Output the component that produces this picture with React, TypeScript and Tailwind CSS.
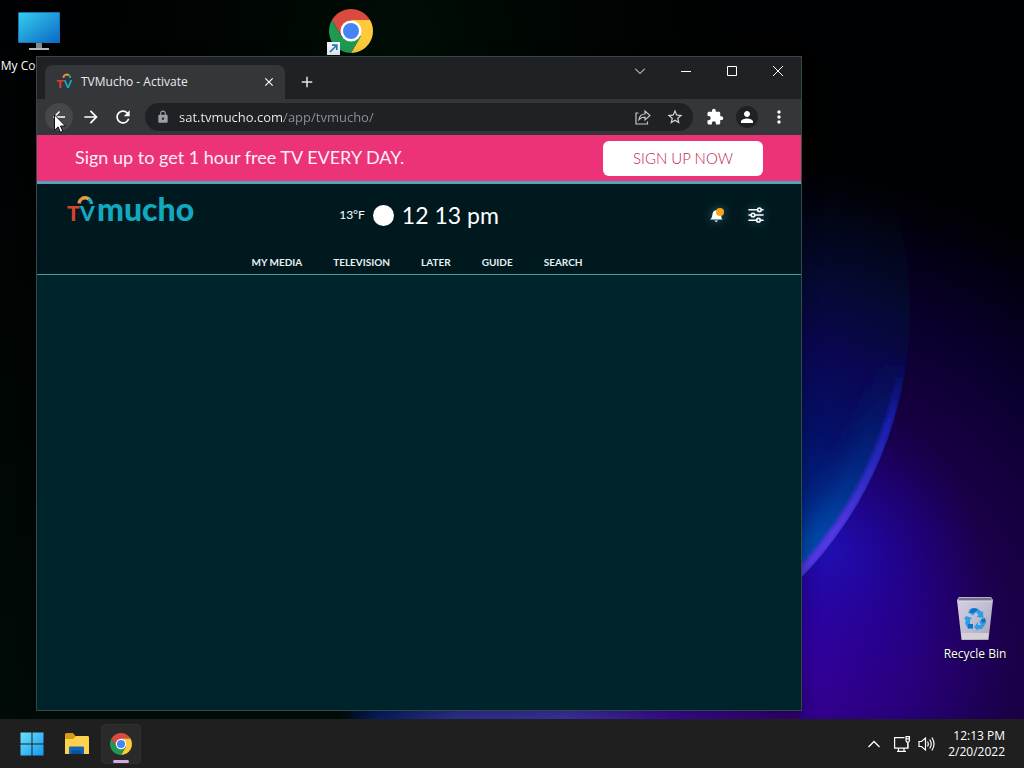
import React from "react";
import {
  MdAdd,
  MdArrowBack,
  MdArrowForward,
  MdClose,
  MdExtension,
  MdLock,
  MdMoreVert,
  MdPerson,
  MdRefresh,
  MdStarBorder,
} from "react-icons/md";

const NAV_ITEMS = ["MY MEDIA", "TELEVISION", "LATER", "GUIDE", "SEARCH"];

function Wallpaper() {
  return (
    <svg
      aria-hidden="true"
      className="absolute inset-0 h-full w-full"
      viewBox="0 0 1024 768"
      preserveAspectRatio="xMidYMid slice"
    >
      <defs>
        <radialGradient id="violet" gradientUnits="userSpaceOnUse" cx="790" cy="650" r="500">
          <stop offset="0" stopColor="#3a00a0" />
          <stop offset="0.25" stopColor="#28007c" />
          <stop offset="0.45" stopColor="#1a0048" />
          <stop offset="0.68" stopColor="#0b0030" />
          <stop offset="0.85" stopColor="#030014" />
          <stop offset="1" stopColor="#000002" stopOpacity="0" />
        </radialGradient>
        <radialGradient id="blueHaze" gradientUnits="userSpaceOnUse" cx="830" cy="550" r="150">
          <stop offset="0" stopColor="#1a18d0" stopOpacity="0.6" />
          <stop offset="0.5" stopColor="#1608b8" stopOpacity="0.3" />
          <stop offset="1" stopColor="#1200a0" stopOpacity="0" />
        </radialGradient>
        <radialGradient id="greenHaze" gradientUnits="userSpaceOnUse" cx="400" cy="40" r="360">
          <stop offset="0" stopColor="#000e06" />
          <stop offset="1" stopColor="#000402" stopOpacity="0" />
        </radialGradient>
        <linearGradient id="leftShade" x1="0" y1="0" x2="0" y2="1">
          <stop offset="0" stopColor="#000906" stopOpacity="0" />
          <stop offset="1" stopColor="#000b07" />
        </linearGradient>
        <radialGradient id="disc" gradientUnits="userSpaceOnUse" cx="760" cy="560" r="400">
          <stop offset="0" stopColor="#0038a0" />
          <stop offset="0.35" stopColor="#041068" />
          <stop offset="0.55" stopColor="#0a0650" />
          <stop offset="0.72" stopColor="#030c34" stopOpacity="0.8" />
          <stop offset="0.88" stopColor="#010a18" stopOpacity="0.5" />
          <stop offset="1" stopColor="#000006" stopOpacity="0" />
        </radialGradient>
        <linearGradient id="rimFade" gradientUnits="userSpaceOnUse" x1="0" y1="360" x2="0" y2="530">
          <stop offset="0" stopColor="#0818a0" stopOpacity="0" />
          <stop offset="0.35" stopColor="#2020c8" stopOpacity="0.7" />
          <stop offset="1" stopColor="#5a34e8" />
        </linearGradient>
        <linearGradient id="tealFade" gradientUnits="userSpaceOnUse" x1="0" y1="340" x2="0" y2="540">
          <stop offset="0" stopColor="#001c68" stopOpacity="0" />
          <stop offset="1" stopColor="#0050b0" />
        </linearGradient>
        <linearGradient id="bottomGlow" gradientUnits="userSpaceOnUse" x1="340" y1="0" x2="800" y2="0">
          <stop offset="0" stopColor="#031f68" stopOpacity="0" />
          <stop offset="0.08" stopColor="#061f68" />
          <stop offset="0.25" stopColor="#303498" />
          <stop offset="0.5" stopColor="#4034ac" />
          <stop offset="0.72" stopColor="#3c0c9c" />
          <stop offset="1" stopColor="#320070" />
        </linearGradient>
        <filter id="soft" filterUnits="userSpaceOnUse" x="0" y="-200" width="1024" height="1000">
          <feGaussianBlur stdDeviation="14" />
        </filter>
        <filter id="rimBlur" filterUnits="userSpaceOnUse" x="0" y="-200" width="1024" height="1000">
          <feGaussianBlur stdDeviation="2" />
        </filter>
        <clipPath id="discClip">
          <circle cx="526" cy="310" r="384" />
        </clipPath>
      </defs>
      <rect width="1024" height="768" fill="#000102" />
      <rect width="800" height="420" fill="url(#greenHaze)" />
      <rect width="36" height="720" fill="url(#leftShade)" />
      <rect x="290" width="734" height="768" fill="url(#violet)" />
      <rect x="600" y="380" width="424" height="388" fill="url(#blueHaze)" />
      <g clipPath="url(#discClip)">
        <circle cx="526" cy="310" r="384" fill="url(#disc)" />
        <circle cx="526" cy="310" r="372" fill="none" stroke="url(#tealFade)" strokeWidth="34" filter="url(#soft)" />
        <circle cx="526" cy="310" r="380" fill="none" stroke="url(#rimFade)" strokeWidth="9" filter="url(#rimBlur)" />
      </g>
      <rect x="36" y="706" width="364" height="20" fill="#000d08" />
      <rect x="340" y="706" width="460" height="18" fill="url(#bottomGlow)" />
    </svg>
  );
}

function ChromeLogo({ className }: { className: string }) {
  return (
    <svg aria-hidden="true" viewBox="-22 -22 44 44" className={className}>
      <path d="M-19.05-11A22 22 0 0 1 19.05-11L0-11L-9.53 5.5Z" fill="#db4a3f" />
      <path d="M0-11H19.05A22 22 0 0 1 0 22L9.53 5.5Z" fill="#fdca3b" />
      <path d="M-19.05-11A22 22 0 0 0 0 22L9.53 5.5H-9.53Z" fill="#1f9a55" />
      <circle r="10.5" fill="#fff" />
      <circle r="8" fill="#4484f4" />
    </svg>
  );
}

function MonitorIcon() {
  return (
    <svg aria-hidden="true" viewBox="0 0 42 40" className="h-10 w-[42px]">
      <defs>
        <linearGradient id="screen" x1="0" y1="0" x2="1" y2="1">
          <stop offset="0" stopColor="#35cdea" />
          <stop offset="1" stopColor="#0b69c8" />
        </linearGradient>
      </defs>
      <path d="M18 31h6v6h-6z" fill="#7f8b92" />
      <path d="M11 36h20v2H11z" fill="#b4bec4" />
      <rect width="42" height="31" rx="1" fill="#1674b5" />
      <rect x="1" y="1" width="40" height="29" fill="url(#screen)" />
    </svg>
  );
}

function RecycleBinIcon() {
  return (
    <svg aria-hidden="true" viewBox="0 0 36 43" className="h-[43px] w-9">
      <defs>
        <linearGradient id="bin" x1="0" y1="0" x2="1" y2="1">
          <stop offset="0" stopColor="#d7d2e2" />
          <stop offset="0.5" stopColor="#c3bdd0" />
          <stop offset="1" stopColor="#a8a2b6" />
        </linearGradient>
      </defs>
      <path d="M0 3L2 0h32l2 3-4.500 40h-27z" fill="url(#bin)" />
      <path d="M2 .8h32l1 3H1z" fill="#77708c" />
      <path d="M1 4h34" stroke="#e9e6ef" strokeWidth="0.8" />
      <path d="M4.300 36h27.400l-.8 6H5.100z" fill="#d4d0d8" />
      <g fill="#2c9ee8">
        <path d="M13 12q4-1.500 8 0l4 3 1-1 .5 7-7-1 2-2-2.500-3-3 3.500-5-3z" />
        <path d="M9 19l6 2-2 2v5l3 0v4h-5l-3-6 1-3-2-1z" />
        <path d="M22 24l5-2 2 4-4 6h-4v2l-4-4 4-5v3h3z" />
      </g>
      <path d="M14 12l3-1 4 1-4 4-4 0zM11 27h5v4h-5zM24 22l4-1 1 4-4 1z" fill="#1470c0" />
    </svg>
  );
}

function TvMark({ className }: { className: string }) {
  return (
    <svg aria-hidden="true" viewBox="0 0 30 32" className={className}>
      <text x="0" y="26" fontFamily="Lato, sans-serif" fontWeight="900" fontSize="21" fill="#d8432f">
        T
      </text>
      <text x="13" y="26" fontFamily="Lato, sans-serif" fontWeight="900" fontSize="21" fill="#16a9c4">
        V
      </text>
      <path d="M12 8.500a6.800 6.800 0 0 1 4-5.500" fill="none" stroke="#e88a4a" strokeWidth="3.400" />
      <path d="M15.500 3.200a6.800 6.800 0 0 1 6.500.8" fill="none" stroke="#f0a040" strokeWidth="3.400" />
      <path d="M21.500 3.600a6.800 6.800 0 0 1 3 5.400" fill="none" stroke="#16a9c4" strokeWidth="3.400" />
    </svg>
  );
}

const toolButton = "flex size-7 shrink-0 items-center justify-center rounded-full text-white";
const windowButton = "flex h-7 w-[46px] items-center justify-center text-white";

function TabStrip() {
  return (
    <div className="flex h-[42px] items-end bg-[#202124]">
      <div className="ml-2 flex h-[34px] w-60 items-center rounded-t-lg bg-[#35363a] pl-[11px] pr-2">
        <TvMark className="size-[18px] shrink-0" />
        <span className="ml-[7px] flex-1 text-[12px] text-[#e8eaed]">TVMucho - Activate</span>
        <button aria-label="Close tab" className="flex size-4 items-center justify-center text-white">
          <MdClose className="size-3.5" />
        </button>
      </div>
      <button aria-label="New tab" className="ml-2 flex h-[34px] w-7 items-center justify-center text-[#e0e2e5]">
        <MdAdd className="size-[18px]" />
      </button>
      <div className="ml-auto flex self-start">
        <button aria-label="Search tabs" className={windowButton}>
          <svg viewBox="0 0 10 10" className="size-2.5" fill="none" stroke="currentColor">
            <path d="M0 2.500L5 7.500L10 2.500" />
          </svg>
        </button>
        <button aria-label="Minimize" className={windowButton}>
          <svg viewBox="0 0 10 10" className="size-2.5" fill="none" stroke="currentColor">
            <path d="M0 5.500h10" />
          </svg>
        </button>
        <button aria-label="Maximize" className={windowButton}>
          <svg viewBox="0 0 10 10" className="size-2.5" fill="none" stroke="currentColor">
            <path d="M.5.5h9v9h-9z" />
          </svg>
        </button>
        <button aria-label="Close" className={windowButton}>
          <svg viewBox="0 0 10 10" className="size-2.5" fill="none" stroke="currentColor">
            <path d="M0 0L10 10M10 0L0 10" />
          </svg>
        </button>
      </div>
    </div>
  );
}

function Toolbar() {
  return (
    <div className="flex h-9 items-center gap-1 bg-[#35363a] px-2">
      <button aria-label="Back" className="flex size-7 shrink-0 items-center justify-center rounded-full bg-[#45474b] text-white">
        <MdArrowBack className="size-[18px]" />
      </button>
      <button aria-label="Forward" className={toolButton}>
        <MdArrowForward className="size-5" />
      </button>
      <button aria-label="Reload" className={toolButton}>
        <MdRefresh className="size-5" />
      </button>
      <div className="ml-1 mr-1 flex h-7 min-w-0 flex-1 items-center rounded-full bg-[#202124] pl-[11px] pr-1">
        <MdLock className="size-3.5 shrink-0 text-[#9aa0a6]" />
        <input
          aria-label="Address"
          defaultValue="sat.tvmucho.com/app/tvmucho/"
          className="ml-[9px] min-w-0 flex-1 bg-[linear-gradient(90deg,#f1f3f4_105px,#8d9297_105px)] bg-clip-text pt-0.5 text-[13px] text-transparent outline-none"
        />
        <div className="flex gap-1">
          <button aria-label="Share" className="flex size-7 items-center justify-center text-[#c4c7ca]">
            <svg viewBox="0 0 16 16" className="size-4" fill="none" stroke="currentColor" strokeWidth="1.200">
              <path d="M3.500 4H1v11h11.500v-2.500" />
              <path d="M4 10.500c.5-3.500 3-5.500 6-5.500V2l5 4.500L10 11V8.200C7.500 8.200 5.500 8.800 4 10.500z" />
            </svg>
          </button>
          <button aria-label="Bookmark" className="flex size-7 items-center justify-center text-[#d5d7da]">
            <MdStarBorder className="size-[18px]" />
          </button>
        </div>
      </div>
      <button aria-label="Extensions" className={toolButton}>
        <MdExtension className="size-[18px]" />
      </button>
      <button aria-label="Profile" className={toolButton}>
        <span className="flex size-[22px] items-center justify-center rounded-full bg-[#202124]">
          <MdPerson className="size-[18px]" />
        </span>
      </button>
      <button aria-label="Menu" className={toolButton}>
        <MdMoreVert className="size-5" />
      </button>
    </div>
  );
}

function PromoBanner() {
  return (
    <div className="flex h-[49px] items-center justify-between border-b-[3px] border-[#4fa3b8] bg-[#ec3378] px-[38px]">
      <p className="pb-0.5 font-[Lato,sans-serif] text-[18px] leading-6 text-[#fdeef4]">
        Sign up to get 1 hour free TV EVERY DAY.
      </p>
      <button className="flex h-[35px] w-40 items-center justify-center rounded-md bg-white font-[Lato,sans-serif] text-[15px] font-light text-[#c01c50]">
        SIGN UP NOW
      </button>
    </div>
  );
}

function SiteHeader() {
  return (
    <header className="flex h-[91px] flex-col justify-between border-b border-[#3f9f93] bg-[#00191f] pb-1">
      <div className="grid h-[62px] grid-cols-[1fr_auto_1fr] items-center px-[30px]">
        <a href="#home" aria-label="TVmucho" className="flex items-start pb-2">
          <TvMark className="h-8 w-[30px] shrink-0" />
          <span className="font-[Lato,sans-serif] text-[32px] font-black leading-7 text-[#12a9bf]">mucho</span>
        </a>
        <div className="flex items-center gap-2 text-white">
          <span className="font-[Lato,sans-serif] text-[12px]">13°F</span>
          <span className="size-[21px] rounded-full bg-white" />
          <span className="font-[Lato,sans-serif] text-[23px] leading-8">12 13 pm</span>
        </div>
        <div className="flex items-center justify-end gap-[23px] pr-[7px] text-white">
          <button aria-label="Notifications" className="size-4 drop-shadow-[0_0_5px_#2b6678]">
            <svg viewBox="0 0 16 16" className="size-4">
              <path d="M1 12.500c2-1 2-3 2.500-5.500C4 4 6 3 8 3c3 0 4.500 2 4.200 5 0 2 .3 3.500 1.300 4.500zM5.500 13.500h3.500l-1.700 1.700z" fill="#fff" />
              <circle cx="11" cy="5" r="4" fill="#f6a51c" />
            </svg>
          </button>
          <button aria-label="Settings" className="size-4 drop-shadow-[0_0_5px_#2b6678]">
            <svg viewBox="0 0 16 16" className="size-4" fill="none" stroke="#fff" strokeWidth="1.600" strokeLinecap="round">
              <path d="M1 2.800h8.500M13.500 2.800h1.500M1 8h2M7 8h8M1 13.200h7.500M12.500 13.200h2.500" />
              <circle cx="11.400" cy="2.800" r="1.800" />
              <circle cx="5" cy="8" r="1.800" />
              <circle cx="10.500" cy="13.200" r="1.800" />
            </svg>
          </button>
        </div>
      </div>
      <nav className="flex h-4 justify-center gap-[31px] pr-1 font-[Lato,sans-serif] text-[10px] font-bold leading-4 text-[#e6f0f1]">
        {NAV_ITEMS.map((item) => (
          <a key={item} href={"#" + item.toLowerCase().replace(" ", "-")}>
            {item}
          </a>
        ))}
      </nav>
    </header>
  );
}

function Taskbar() {
  return (
    <footer className="relative flex h-[49px] items-center bg-[#201f20] px-3 text-white">
      <button aria-label="Start" className="flex size-10 items-center justify-center">
        <svg viewBox="0 0 24 24" className="size-6">
          <defs>
            <linearGradient id="start" x1="0" y1="0" x2="1" y2="1">
              <stop offset="0" stopColor="#6de0fb" />
              <stop offset="1" stopColor="#129af0" />
            </linearGradient>
          </defs>
          <path d="M.5.5h11v11H.5zM12.500.5h11v11h-11zM.5 12.500h11v11H.5zM12.500 12.500h11v11h-11z" fill="url(#start)" />
        </svg>
      </button>
      <button aria-label="File Explorer" className="ml-[5px] flex size-10 items-center justify-center">
        <svg viewBox="0 0 24 24" className="size-6">
          <path d="M0 2.500Q0 1 1.500 1H8l2.500 3H22.500Q24 4 24 5.500V12H0z" fill="#d99a18" />
          <path d="M0 7h8l3-3h11.500Q24 4 24 5.500V22H0z" fill="#ffd24d" />
          <path d="M4 22v-6.500q0-1 1-1h13q1 0 1 1V22z" fill="#1268b8" />
          <path d="M6.500 22v-3.500h10V22z" fill="#0d4f96" />
        </svg>
      </button>
      <button aria-label="Google Chrome" className="relative ml-1 flex size-10 items-center justify-center rounded border border-[#303031] bg-[#2a2a2b]">
        <ChromeLogo className="size-[22px]" />
        <span className="absolute bottom-0 h-[3px] w-4 rounded-full bg-[#d8a8e0]" />
      </button>
      <div className="ml-auto flex items-center">
        <button aria-label="Show hidden icons" className="flex h-10 w-6 items-center justify-center">
          <svg viewBox="0 0 12 12" className="size-3" fill="none" stroke="currentColor" strokeWidth="1.300">
            <path d="M.5 9L6 3.500L11.500 9" />
          </svg>
        </button>
        <button aria-label="Network and volume" className="flex h-10 items-center gap-2 pl-2 pr-[13px]">
          <svg viewBox="0 0 16 16" className="size-4" fill="none" stroke="currentColor" strokeWidth="1.200">
            <path d="M10.500 1.600H.6v10.500h13.500V7M4.500 12.500v3M10 12.500v3M3 15.400h9M12 .6h3.400v3.800L14.800 6h-2.200L12 4.400zM12 2.800h3.400M13.700 6v6" />
          </svg>
          <svg viewBox="0 0 17 16" className="h-4 w-[17px]" fill="none" stroke="currentColor" strokeWidth="1.200">
            <path d="M1 5.500h2.500L7.500 2v12L3.500 10.500H1zM9.500 5.500q1.600 2.500 0 5M11.700 3.500q3 4.500 0 9M13.900 1.500q4.200 6.500 0 13" />
          </svg>
        </button>
        <div className="pr-[7px] text-right text-[12px] leading-4">
          <div>12:13 PM</div>
          <div>2/20/2022</div>
        </div>
      </div>
    </footer>
  );
}

export default function App() {
  return (
    <div className="relative flex h-screen flex-col overflow-hidden bg-black font-[Open_Sans,Noto_Sans,sans-serif]">
      <Wallpaper />
      <main className="relative flex-1">
        <div className="absolute left-0 top-3 flex w-[78px] flex-col items-center gap-1.5 text-[12px] leading-4 text-white">
          <MonitorIcon />
          <span className="whitespace-nowrap [text-shadow:0_1px_2px_#000]">My Computer</span>
        </div>
        <div className="absolute left-[329px] top-[9px]">
          <ChromeLogo className="size-11" />
        </div>
        <svg aria-hidden="true" viewBox="0 0 13 13" className="absolute left-[327px] top-[42px] size-[13px]">
          <rect width="13" height="13" fill="#f2f6fa" />
          <path d="M3 10L9.500 3.500M5 3.200h4.800V8" fill="none" stroke="#2b78b8" strokeWidth="1.700" />
        </svg>
        <div className="absolute bottom-[57px] right-[18px] flex w-[62px] flex-col items-center gap-1.5 text-[12px] leading-4 text-white">
          <RecycleBinIcon />
          <span className="whitespace-nowrap [text-shadow:0_1px_2px_#000]">Recycle Bin</span>
        </div>

        <section
          aria-label="Browser window"
          className="absolute bottom-2 left-9 right-[222px] top-14 flex flex-col border border-[#34474b] bg-[#00242b] shadow-[0_4px_16px_rgba(0,0,0,0.35)]"
        >
          <TabStrip />
          <Toolbar />
          <PromoBanner />
          <SiteHeader />
          <div className="flex-1" />
        </section>

        <svg aria-hidden="true" viewBox="0 0 12 19" className="absolute left-[54px] top-[114px] h-[19px] w-3">
          <path d="M.5.8v15.500l3.600-3.400 2.300 5.300 2.400-1-2.300-5.200h4.900z" fill="#fff" stroke="#000" strokeWidth="0.900" />
        </svg>
      </main>
      <Taskbar />
    </div>
  );
}
